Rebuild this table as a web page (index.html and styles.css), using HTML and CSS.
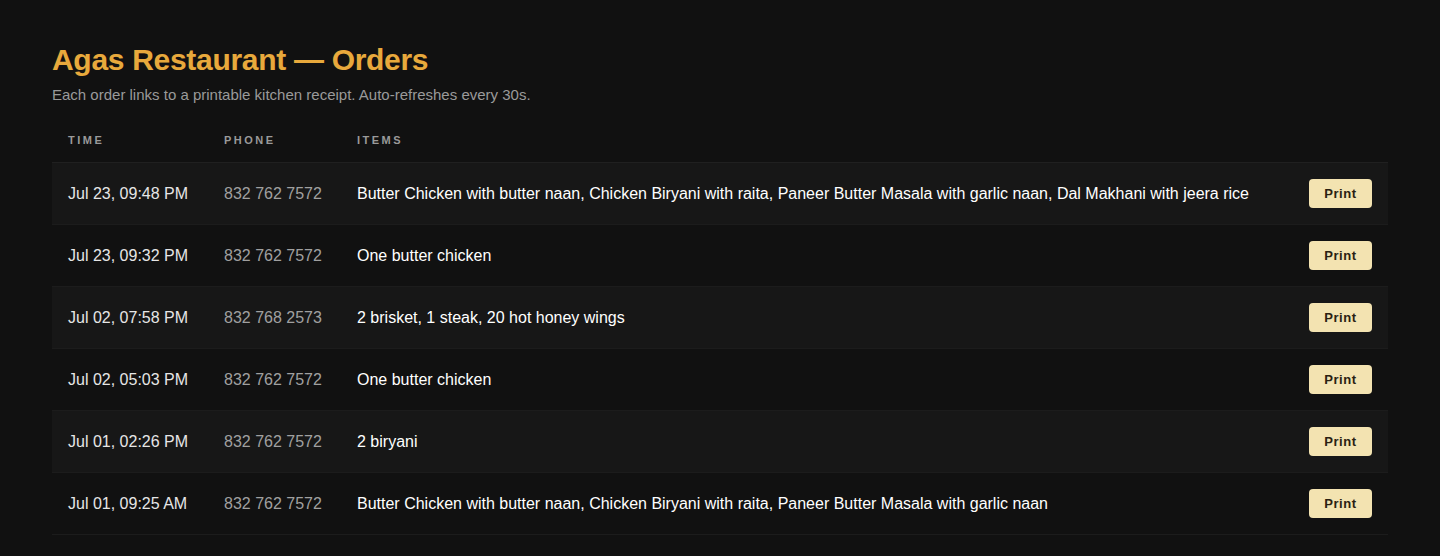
FILE: index.html
```html
<!DOCTYPE html>
<html lang="en">
<head>
    <meta charset="UTF-8">
    <meta name="viewport" content="width=device-width, initial-scale=1.0">
    <title>Agas Restaurant — Orders</title>
    <link rel="stylesheet" href="styles.css">
</head>
<body>
    <div class="page">
        <h1>Agas Restaurant — Orders</h1>
        <p class="sub">Each order links to a printable kitchen receipt. Auto-refreshes every 30s.</p>
        <table class="orders">
            <colgroup>
                <col class="c-time">
                <col class="c-phone">
                <col>
                <col class="c-action">
            </colgroup>
            <thead>
                <tr>
                    <th>Time</th>
                    <th>Phone</th>
                    <th>Items</th>
                    <th></th>
                </tr>
            </thead>
            <tbody>
                <tr>
                    <td class="time">Jul 23, 09:48 PM</td>
                    <td class="phone">832 762 7572</td>
                    <td class="items">Butter Chicken with butter naan, Chicken Biryani with raita, Paneer Butter Masala with garlic naan, Dal Makhani with jeera rice</td>
                    <td class="action"><a href="#" class="btn">Print</a></td>
                </tr>
                <tr>
                    <td class="time">Jul 23, 09:32 PM</td>
                    <td class="phone">832 762 7572</td>
                    <td class="items">One butter chicken</td>
                    <td class="action"><a href="#" class="btn">Print</a></td>
                </tr>
                <tr>
                    <td class="time">Jul 02, 07:58 PM</td>
                    <td class="phone">832 768 2573</td>
                    <td class="items">2 brisket, 1 steak, 20 hot honey wings</td>
                    <td class="action"><a href="#" class="btn">Print</a></td>
                </tr>
                <tr>
                    <td class="time">Jul 02, 05:03 PM</td>
                    <td class="phone">832 762 7572</td>
                    <td class="items">One butter chicken</td>
                    <td class="action"><a href="#" class="btn">Print</a></td>
                </tr>
                <tr>
                    <td class="time">Jul 01, 02:26 PM</td>
                    <td class="phone">832 762 7572</td>
                    <td class="items">2 biryani</td>
                    <td class="action"><a href="#" class="btn">Print</a></td>
                </tr>
                <tr>
                    <td class="time">Jul 01, 09:25 AM</td>
                    <td class="phone">832 762 7572</td>
                    <td class="items">Butter Chicken with butter naan, Chicken Biryani with raita, Paneer Butter Masala with garlic naan</td>
                    <td class="action"><a href="#" class="btn">Print</a></td>
                </tr>
            </tbody>
        </table>
    </div>
</body>
</html>
```

FILE: styles.css
```css
body {
    margin: 0;
    background: #111111;
    color: #eeeeee;
    font-family: "Liberation Sans", Arial, sans-serif;
}

.page {
    padding: 40px 52px;
}

h1 {
    margin: 0;
    font-size: 30px;
    line-height: 40px;
    font-weight: bold;
    letter-spacing: -0.3px;
    color: #e8a93c;
}

.sub {
    margin: 5px 0 0;
    font-size: 15px;
    line-height: 20px;
    color: #9a9a9a;
}

.orders {
    width: 100%;
    margin-top: 13px;
    border-collapse: collapse;
    table-layout: fixed;
}

.c-time {
    width: 156px;
}
.c-phone {
    width: 133px;
}
.c-action {
    width: 95px;
}

th {
    padding: 16px 16px;
    text-align: left;
    font-size: 11px;
    line-height: 12px;
    font-weight: bold;
    letter-spacing: 2.5px;
    text-transform: uppercase;
    color: #9a9a9a;
    border-bottom: 1px solid #202020;
}

td {
    padding: 16px 16px;
    height: 29px;
    font-size: 16px;
    line-height: 29px;
    border-bottom: 1px solid #1c1c1c;
    white-space: nowrap;
}

tbody tr:nth-child(odd) {
    background: #171717;
}

.time {
    color: #e6e6e6;
}
.phone {
    color: #a0a0a0;
}
.items {
    color: #ffffff;
}

.btn {
    display: block;
    margin-left: auto;
    width: 63px;
    height: 29px;
    text-align: center;
    background: #f3e3b1;
    color: #2a2112;
    font-size: 13px;
    font-weight: bold;
    letter-spacing: 0.6px;
    line-height: 29px;
    border-radius: 4px;
    text-decoration: none;
}
```
